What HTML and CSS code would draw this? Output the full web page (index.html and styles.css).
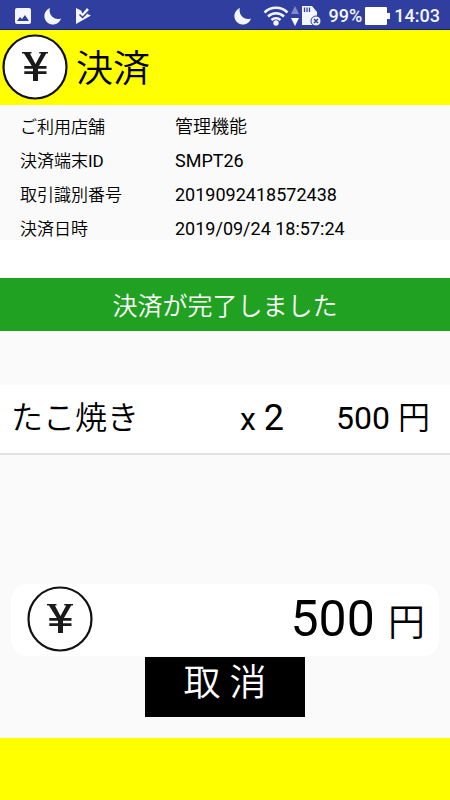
FILE: index.html
```html
<!DOCTYPE html>
<html lang="ja">
<head>
<meta charset="UTF-8" />
<meta name="viewport" content="width=device-width, initial-scale=1" />
<title>決済</title>
<link rel="stylesheet" href="styles.css">
</head>
<body>
<div class="status-bar">
  <div class="status-left">
    <svg width="18" height="18" viewBox="0 0 18 18"><path fill="#f4f6ff" fill-rule="evenodd" d="M3 1h12a2 2 0 0 1 2 2v12a2 2 0 0 1-2 2H3a2 2 0 0 1-2-2V3a2 2 0 0 1 2-2zM3 14h12l-4-6-3 4-2-2z"/></svg>
    <svg width="18" height="18" viewBox="0 0 18 18"><path fill="#f4f6ff" d="M6 1A8.500 8.500 0 1 0 17 11.500A8.500 8.500 0 0 1 6 1z"/></svg>
    <svg width="18" height="18" viewBox="0 0 18 18"><path fill="#f4f6ff" d="M2 1l5 2.500 1.500 3L13 1l2 2-1.500 4L17 8.500 2 17z"/><path fill="none" stroke="#303f9f" stroke-width="1.500" d="M5.500 7.500l3 3 7-7"/></svg>
  </div>
  <div class="status-right">
    <svg width="18" height="18" viewBox="0 0 18 18"><path fill="#f4f6ff" d="M6 1A8.500 8.500 0 1 0 17 11.500A8.500 8.500 0 0 1 6 1z"/></svg>
    <svg class="wifi" width="26" height="22" viewBox="0 0 26 22"><g fill="none" stroke="#f4f6ff" stroke-width="2.500"><path d="M1.500 7.500a16.500 16.500 0 0 1 23 0"/><path d="M5 11.500a11.500 11.500 0 0 1 16 0"/><path d="M8.500 15a6.500 6.500 0 0 1 9 0"/></g><circle cx="13" cy="18" r="2.700" fill="#f4f6ff"/></svg>
    <svg width="10" height="22" viewBox="0 0 10 22"><path fill="#8089ca" d="M5 1l4 8H1z"/><path fill="#fff" d="M1 13h8l-4 8z"/></svg>
    <svg width="22" height="22" viewBox="0 0 22 22"><path fill="#f4f6ff" d="M2 1h10l5 6v13H2z"/><path stroke="#303f9f" stroke-width="1.300" d="M4.500 2.500V7M7 2.500V7M9.500 2.500V7"/><circle cx="16" cy="16" r="5" fill="#f4f6ff" stroke="#303f9f"/><path stroke="#303f9f" stroke-width="1.500" d="M14 14l4 4M18 14l-4 4"/></svg>
    <span class="battery-text">99%</span>
    <svg width="26" height="20" viewBox="0 0 26 20"><path fill="#fff" d="M2 1h20a1 1 0 0 1 1 1v5h3v6h-3v5a1 1 0 0 1-1 1H2a1 1 0 0 1-1-1V2a1 1 0 0 1 1-1z"/></svg>
    <span class="clock">14:03</span>
  </div>
</div>

<header class="header">
  <svg class="yen" viewBox="0 0 66 66"><circle cx="33" cy="33" r="31.500" fill="#fff" stroke="#111" stroke-width="2.200"/><path fill="#1a1a1a" d="M20 18h9.500v1.600h-1.600L33.500 30 39.200 19.600h-1.900V18H46v1.600h-1.800L37 32h7.500v2.800H36v2.400h8.500V40H36v7h-5v-7h-8.700v-2.800H31v-2.400h-8.700V32h7.500L22 19.600H20z"/></svg>
  <h1>決済</h1>
</header>

<main>
  <!-- 取引情報 -->
  <dl class="info">
    <dt>ご利用店舗</dt><dd>管理機能</dd>
    <dt>決済端末ID</dt><dd>SMPT26</dd>
    <dt>取引識別番号</dt><dd>2019092418572438</dd>
    <dt>決済日時</dt><dd>2019/09/24 18:57:24</dd>
  </dl>

  <div class="message">決済が完了しました</div>

  <!-- 商品一覧 -->
  <ul class="item-list">
    <li class="item">
      <span class="item-name">たこ焼き</span>
      <span class="item-count">x <span class="count">2</span></span>
      <span class="item-price">500 円</span>
    </li>
  </ul>

  <!-- 合計 -->
  <div class="total">
    <svg class="yen" viewBox="0 0 66 66"><circle cx="33" cy="33" r="31.500" fill="#fff" stroke="#111" stroke-width="2.200"/><path fill="#1a1a1a" d="M20 18h9.500v1.600h-1.600L33.500 30 39.200 19.600h-1.900V18H46v1.600h-1.800L37 32h7.500v2.800H36v2.400h8.500V40H36v7h-5v-7h-8.700v-2.800H31v-2.400h-8.700V32h7.500L22 19.600H20z"/></svg>
    <div class="total-price"><span class="total-num">500</span> 円</div>
  </div>

  <button type="button" class="cancel-btn">取 消</button>
</main>

<footer class="footer"></footer>
</body>
</html>
```
FILE: styles.css
```css
* {
  box-sizing: border-box;
}
body {
  margin: 0;
  min-height: 100vh;
  display: flex;
  flex-direction: column;
  font-family: Roboto, "Noto Sans CJK JP DemiLight", "Noto Sans CJK JP", sans-serif;
  color: #000;
  background: #fafafa;
}

/* ステータスバー */
.status-bar {
  display: flex;
  justify-content: space-between;
  align-items: center;
  height: 30px;
  padding: 2px 10px 0 14px;
  background: #303f9f;
  border-bottom: 1px solid #1c255f;
  color: #f4f6ff;
  font-size: 18px;
  font-weight: 500;
}
.status-left,
.status-right {
  display: flex;
  align-items: center;
}
.status-left {
  gap: 12px;
}
.wifi {
  margin: 0 1px 0 11px;
}
.battery-text {
  margin: 0 2px 0 7px;
}
.clock {
  margin-left: 4px;
}

/* ヘッダー */
.header {
  display: flex;
  align-items: center;
  gap: 8px;
  height: 75px;
  padding: 0 2px 2px;
  background: #ffff00;
}
.header h1 {
  margin: 0;
  padding-top: 6px;
  font-size: 37px;
  font-weight: 400;
  line-height: 48px;
}
.yen {
  width: 66px;
  height: 66px;
  flex-shrink: 0;
}

main {
  flex: 1;
  display: flex;
  flex-direction: column;
}
.info {
  display: grid;
  grid-template-columns: 155px 1fr;
  grid-auto-rows: 34px;
  align-items: center;
  margin: 0;
  padding: 5px 20px 0;
  height: 135px;
  font-size: 17px;
}
.info dt,
.info dd {
  margin: 0;
  line-height: 34px;
}
.info dd {
  font-size: 18px;
}

.message {
  padding: 10px 0 6px;
  border-top: 38px solid #fff;
  background: #21a121;
  color: #fff;
  font-size: 25px;
  line-height: 37px;
  text-align: center;
}

/* 商品 */
.item-list {
  flex: 1;
  list-style: none;
  margin: 0;
  padding: 54px 0 0;
}
.item {
  display: flex;
  align-items: center;
  padding: 7px 20px 10px 11px;
  background: #fff;
  border-bottom: 2px solid #e2e2e2;
  font-size: 32px;
  line-height: 48px;
}
.item-name {
  flex: 1;
}
.item-count {
  padding-top: 2px;
}
.count {
  font-size: 36px;
}
.item-price {
  width: 146px;
  text-align: right;
}

/* 合計 */
.total {
  display: flex;
  align-items: center;
  justify-content: space-between;
  height: 72px;
  margin: 0 11px 1px;
  padding: 0 14px 2px 16px;
  background: #fff;
  border-radius: 16px;
}
.total-price {
  padding-top: 4px;
  font-size: 37px;
  line-height: 60px;
}
.total-num {
  margin-right: 4px;
  font-size: 50px;
}

.cancel-btn {
  align-self: center;
  width: 160px;
  height: 60px;
  margin-bottom: 21px;
  padding: 0 0 6px;
  border: none;
  background: #000;
  color: #fff;
  font-family: inherit;
  font-size: 37px;
  line-height: 54px;
  cursor: pointer;
}

.footer {
  height: 62px;
  background: #ffff00;
}
```
